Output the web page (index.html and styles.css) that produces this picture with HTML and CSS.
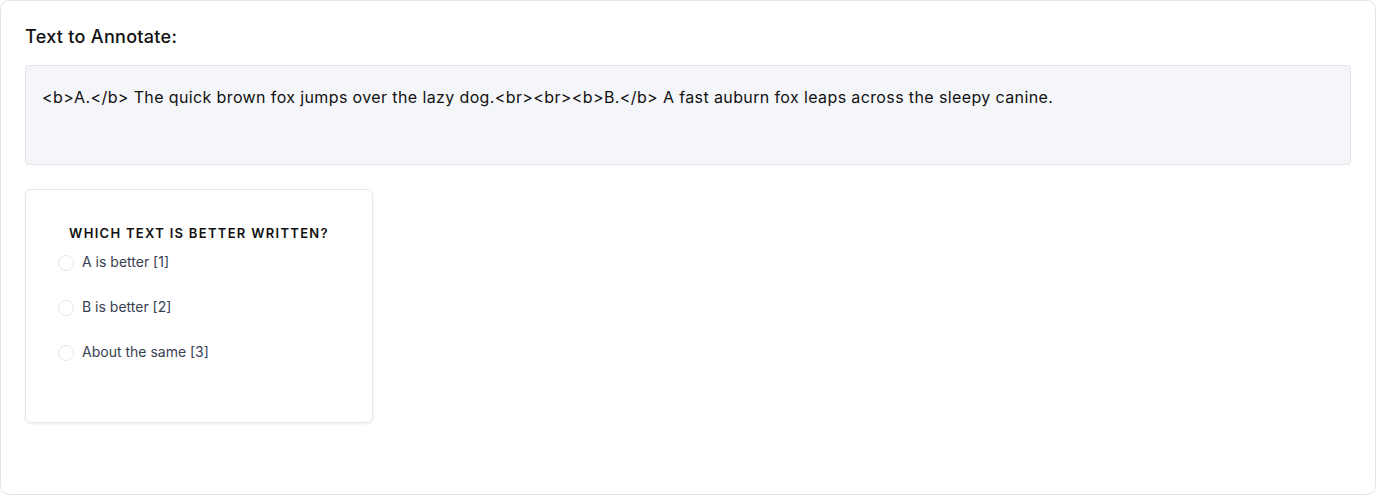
FILE: index.html
```html
<!DOCTYPE html>
<html>
<head>
<meta charset="utf-8">
<link rel="stylesheet" href="styles.css">
</head>
<body>
<div class="frame">
  <h2 class="heading">Text to Annotate:</h2>
  <div class="textbox">&lt;b&gt;A.&lt;/b&gt; The quick brown fox jumps over the lazy dog.&lt;br&gt;&lt;br&gt;&lt;b&gt;B.&lt;/b&gt; A fast auburn fox leaps across the sleepy canine.</div>
  <div class="card">
    <div class="card-title">WHICH TEXT IS BETTER WRITTEN?</div>
    <div class="options">
      <label class="option"><span class="radio"></span><span>A is better [1]</span></label>
      <label class="option"><span class="radio"></span><span>B is better [2]</span></label>
      <label class="option"><span class="radio"></span><span>About the same [3]</span></label>
    </div>
  </div>
</div>
</body>
</html>
```
FILE: styles.css
```css
* { box-sizing: border-box; }
html, body { margin: 0; padding: 0; background: #fff; }
body { font-family: Inter, "Noto Sans", sans-serif; color: #111; }
.frame {
  width: 1376px;
  height: 495px;
  border: 1px solid #e3e4e8;
  border-radius: 9px;
  padding: 24px 24px 0 24px;
}
.heading {
  margin: 0;
  font-size: 18px;
  font-weight: 500;
  line-height: 24px;
  letter-spacing: 0.3px;
  color: #111;
}
.textbox {
  margin-top: 16px;
  background: #f5f6fa;
  border: 1px solid #e2e4e9;
  border-radius: 4px;
  height: 100px;
  padding: 19px 16px;
  font-size: 16px;
  line-height: 24px;
  letter-spacing: 0.38px;
  color: #111;
}
.card {
  margin-top: 24px;
  width: 348px;
  height: 234px;
  border: 1px solid #e5e7eb;
  border-radius: 6px;
  box-shadow: 0 1px 3px rgba(0,0,0,0.08);
  padding: 34px 32px;
}
.card-title {
  text-align: center;
  font-size: 13px;
  font-weight: 600;
  letter-spacing: 1.3px;
  line-height: 18px;
  color: #111;
}
.options {
  margin-top: 10px;
  display: flex;
  flex-direction: column;
  gap: 25px;
}
.option {
  display: flex;
  align-items: center;
  gap: 8px;
  font-size: 14px;
  line-height: 20px;
  color: #374151;
}
.radio {
  width: 16px;
  height: 16px;
  border: 1px solid #e5e7eb;
  border-radius: 50%;
  margin-top: 2px;
  background: #fff;
}
```
